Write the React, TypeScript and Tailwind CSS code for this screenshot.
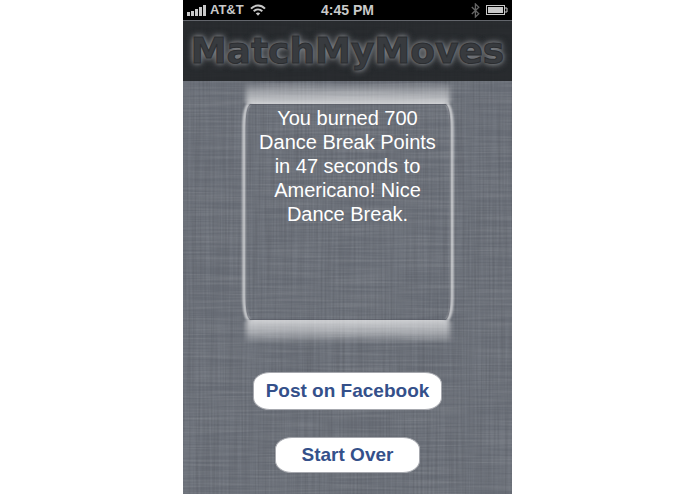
import React from 'react';

const signalBars = [4, 5, 7, 9, 11];

const StatusBar: React.FC = () => (
  <div className="relative grid h-5 grid-cols-3 items-center bg-black px-1 text-sm leading-5 font-bold text-[#c9c9c9]">
    <div className="flex items-center gap-1">
      <svg width="19" height="11" viewBox="0 0 19 11" fill="#c9c9c9" aria-label="Signal">
        {signalBars.map((height, i) => (
          <rect key={height} x={i * 4} y={11 - height} width="3" height={height} />
        ))}
      </svg>
      <span className="text-[13px] leading-5 whitespace-nowrap">AT&amp;T</span>
      <svg className="ml-0.5 shrink-0" width="16" height="12" viewBox="0 0 16 12" fill="none" stroke="#c9c9c9" strokeWidth="2" aria-label="Wi-Fi">
        <path d="M1 4.6C5 .4 11 .4 15 4.6" />
        <path d="M3.7 7.3c2.5-2.4 6.1-2.4 8.6 0" />
        <path d="M5.8 9.3c1.3-1.1 3.1-1.1 4.4 0L8 11.7z" fill="#c9c9c9" stroke="none" />
      </svg>
    </div>
    <span className="text-center whitespace-nowrap">4:45 PM</span>
    <div className="flex items-center justify-end gap-1.5">
      <svg width="9" height="15" viewBox="0 0 9 15" fill="none" stroke="#666" strokeWidth="1.3" aria-label="Bluetooth">
        <path d="M.8 4l7 6.8L4.4 14V1l3.4 3.2-7 6.8" />
      </svg>
      <svg width="22" height="10" viewBox="0 0 22 10" fill="none" aria-label="Battery">
        <rect x=".5" y=".5" width="18" height="9" stroke="#c9c9c9" />
        <rect x="2" y="2" width="15" height="6" fill="#c9c9c9" />
        <path d="M19 3h2v4h-2" stroke="#c9c9c9" />
      </svg>
    </div>
  </div>
);

// Crossed horizontal and vertical threads over a flat colour
const Linen: React.FC = () => (
  <svg className="absolute inset-0 h-full w-full" aria-hidden="true">
    <defs>
      <filter id="weft" x="0" y="0" width="100%" height="100%" colorInterpolationFilters="sRGB">
        <feTurbulence type="fractalNoise" baseFrequency="0.014 0.5" numOctaves="2" seed="4" />
        <feColorMatrix values="0 0 0 0 1  0 0 0 0 1  0 0 0 0 1  1.6 0 0 0 -0.5" />
      </filter>
      <filter id="warp" x="0" y="0" width="100%" height="100%" colorInterpolationFilters="sRGB">
        <feTurbulence type="fractalNoise" baseFrequency="0.5 0.01" numOctaves="2" seed="9" />
        <feColorMatrix values="0 0 0 0 0.1  0 0 0 0 0.1  0 0 0 0 0.12  1.6 0 0 0 -0.5" />
      </filter>
    </defs>
    <rect width="100%" height="100%" fill="#6b7079" />
    <rect width="100%" height="100%" filter="url(#weft)" opacity="0.12" />
    <rect width="100%" height="100%" filter="url(#warp)" opacity="0.15" />
  </svg>
);

const GlowFrame: React.FC = () => (
  <svg className="absolute inset-0 h-full w-full" viewBox="0 1 216 263" preserveAspectRatio="none" aria-hidden="true">
    <defs>
      <linearGradient id="glowTop" x1="0" y1="0" x2="0" y2="1">
        <stop offset="0" stopColor="#fff" stopOpacity="0" />
        <stop offset="0.45" stopColor="#fff" stopOpacity="0.35" />
        <stop offset="1" stopColor="#fff" stopOpacity="0.66" />
      </linearGradient>
      <linearGradient id="glowBottom" x1="0" y1="0" x2="0" y2="1">
        <stop offset="0" stopColor="#fff" stopOpacity="0.66" />
        <stop offset="0.5" stopColor="#fff" stopOpacity="0.4" />
        <stop offset="1" stopColor="#fff" stopOpacity="0" />
      </linearGradient>
      <filter id="soft" x="-100%" y="-10%" width="300%" height="120%">
        <feGaussianBlur stdDeviation="1.1" />
      </filter>
      <filter id="edge" x="-5%" y="-30%" width="110%" height="160%">
        <feGaussianBlur stdDeviation="2.4 0.3" />
      </filter>
    </defs>
    <path d="M6 2H210V20Q209 24 206 24H10Q7 24 6 20z" fill="url(#glowTop)" filter="url(#edge)" />
    <path d="M10 240H206Q209 240 210 244V264H6V244Q7 240 10 240z" fill="url(#glowBottom)" filter="url(#edge)" />
    <path d="M9 24Q4 28 4 48V216Q4 236 9 240" fill="none" stroke="#fff" strokeWidth="3" opacity="0.7" filter="url(#soft)" />
    <path d="M207 24Q212 28 212 48V216Q212 236 207 240" fill="none" stroke="#fff" strokeWidth="3" opacity="0.7" filter="url(#soft)" />
    <path d="M10 24.500H206Q210 28 210 48V216Q210 236 206 239.500H10Q6 236 6 216V48Q6 28 10 24.500z" fill="none" stroke="#4d505a" strokeOpacity="0.45" />
  </svg>
);

type ActionButtonProps = {
  className: string;
  children: React.ReactNode;
};

const ActionButton: React.FC<ActionButtonProps> = ({ className, children }) => (
  <button
    type="button"
    className={`rounded-[17px/12px] border border-[#a6a8ae] bg-white text-[19px] leading-6 font-bold text-[#34508a] ${className}`}
  >
    {children}
  </button>
);

const App: React.FC = () => (
  <div className="min-h-screen bg-white font-['Liberation_Sans',Arial,sans-serif]">
    <div className="relative mx-auto flex min-h-screen w-full max-w-[329px] flex-col overflow-hidden">
      <Linen />
      <StatusBar />
      <header className="relative border-t border-[#63666c] bg-[#1c1e21]/85 pt-2 pb-2 text-center">
        <h1 className="font-['DejaVu_Sans',sans-serif] text-4xl leading-11 font-bold text-[#383b3f] [-webkit-text-stroke:1px_#2b2d30] [text-shadow:0_0_4px_#85878b,0_0_7px_#74777b,0_0_9px_#55585c]">
          MatchMyMoves
        </h1>
      </header>
      <main className="relative flex flex-col items-center">
        <section className="relative min-h-[263px] w-[216px] px-4 pt-[25px]">
          <GlowFrame />
          <p className="relative text-center text-xl leading-6 text-white">
            You burned 700 Dance Break Points in 47 seconds to Americano! Nice Dance Break.
          </p>
        </section>
        <div className="mt-7 flex flex-col items-center gap-[27px]">
          <ActionButton className="px-3 py-1.5">Post on Facebook</ActionButton>
          <ActionButton className="px-[26px] py-[5px]">Start Over</ActionButton>
        </div>
      </main>
    </div>
  </div>
);

export default App;
